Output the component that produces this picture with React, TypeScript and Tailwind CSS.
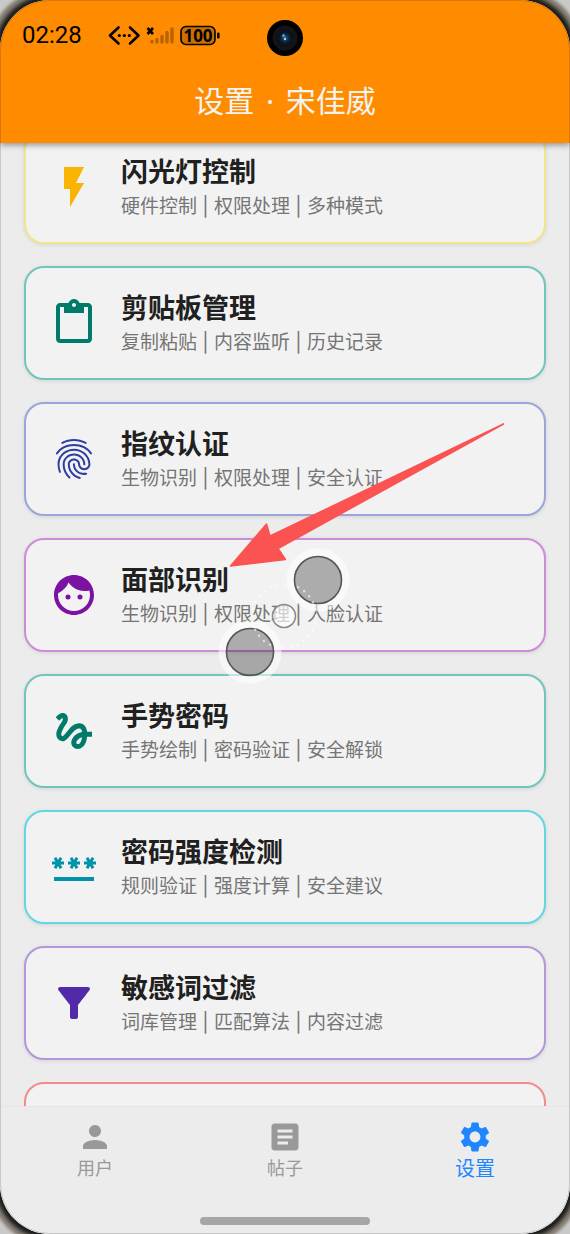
import type { ReactNode } from "react";
import type { IconType } from "react-icons";
import {
   MdArticle,
   MdContentPaste,
   MdFace,
   MdFilterAlt,
   MdFingerprint,
   MdFlashOn,
   MdGesture,
   MdPassword,
   MdPerson,
   MdSettings,
} from "react-icons/md";

type Feature = {
   title: string;
   tags: string;
   icon: IconType;
   border: string;
   color: string;
};

const features: Feature[] = [
   { title: "闪光灯控制", tags: "硬件控制 | 权限处理 | 多种模式", icon: MdFlashOn, border: "border-[#f3e58a]", color: "text-[#fab300]" },
   { title: "剪贴板管理", tags: "复制粘贴 | 内容监听 | 历史记录", icon: MdContentPaste, border: "border-[#72c5bc]", color: "text-[#007a6a]" },
   { title: "指纹认证", tags: "生物识别 | 权限处理 | 安全认证", icon: MdFingerprint, border: "border-[#9aa5d9]", color: "text-[#2c3e9f]" },
   { title: "面部识别", tags: "生物识别 | 权限处理 | 人脸认证", icon: MdFace, border: "border-[#cd8cd8]", color: "text-[#7c12a2]" },
   { title: "手势密码", tags: "手势绘制 | 密码验证 | 安全解锁", icon: MdGesture, border: "border-[#72c5bc]", color: "text-[#007a6a]" },
   { title: "密码强度检测", tags: "规则验证 | 强度计算 | 安全建议", icon: MdPassword, border: "border-[#62d7e2]", color: "text-[#0092a8]" },
   { title: "敏感词过滤", tags: "词库管理 | 匹配算法 | 内容过滤", icon: MdFilterAlt, border: "border-[#b198da]", color: "text-[#5229a8]" },
];

const tabs = [
   { label: "用户", icon: MdPerson, active: false },
   { label: "帖子", icon: MdArticle, active: false },
   { label: "设置", icon: MdSettings, active: true },
];

function StatusBar() {
   return (
      <div className="flex h-[70px] items-center px-[22px] text-black">
         <span className="font-[Roboto] text-[24px] leading-8">02:28</span>
         <svg className="ml-[25px] h-8 w-[116px]" viewBox="0 0 116 32" fill="none" aria-hidden="true">
            <g stroke="#000" strokeWidth="2.6" strokeLinecap="round" strokeLinejoin="round">
               <path d="M11.500 8.500 3 16.500l8.500 8M23 8.500l8.500 8-8.500 8" />
               <path d="m40.500 9 5.500 6m0-6-5.500 6" strokeLinecap="butt" />
            </g>
            <g fill="#000">
               <circle cx="12.300" cy="16.500" r="1.600" />
               <circle cx="17.300" cy="16.500" r="1.600" />
               <circle cx="22.300" cy="16.500" r="1.600" />
            </g>
            <g stroke="#b86300" strokeWidth="3.400" strokeLinecap="round">
               <path d="M45 22.500v.5M50 20.500v2.500M55 17.500v5.500M60 13.500v9.500M65 10v13" />
            </g>
            <rect x="74" y="7.500" width="34" height="18" rx="5" fill="#cc6f00" stroke="#000" strokeWidth="1.600" />
            <rect x="110" y="13.500" width="2.600" height="6" rx="1.300" fill="#000" />
            <text x="91" y="22.500" textAnchor="middle" fill="#000" fontSize="17" fontWeight="700" fontFamily="Noto Sans">
               100
            </text>
         </svg>
      </div>
   );
}

function Camera() {
   return (
      <svg className="absolute top-5 left-1/2 size-9 -translate-x-1/2" viewBox="0 0 36 36" aria-hidden="true">
         <defs>
            <radialGradient id="lens">
               <stop offset="0" stopColor="#2f6d9e" />
               <stop offset=".35" stopColor="#142c47" />
               <stop offset=".7" stopColor="#0a131c" />
               <stop offset="1" stopColor="#0f1114" />
            </radialGradient>
         </defs>
         <circle cx="18" cy="18" r="18" fill="#000" />
         <circle cx="18" cy="18" r="12.500" fill="#121417" />
         <circle cx="18" cy="18" r="9" fill="url(#lens)" />
         <circle cx="16.500" cy="15.500" r="1.500" fill="#4d9ad6" />
         <circle cx="18" cy="19" r="1.200" fill="#9bd0ff" />
      </svg>
   );
}

function FeatureCard({ feature }: { feature: Feature }) {
   const Icon = feature.icon;
   return (
      <button
         className={`flex h-[114px] w-full shrink-0 items-center gap-[23px] rounded-[20px] border-2 bg-[#f2f2f2] px-6 text-left shadow-[0_1px_4px_rgba(0,0,0,0.1)] ${feature.border}`}
      >
         <Icon className={`size-12 shrink-0 ${feature.color}`} />
         <span className="flex flex-col pt-1">
            <span className="text-[27px] leading-9 font-bold text-[#202020]">{feature.title}</span>
            <span className="text-[19px] leading-8 text-[#757575]">{feature.tags}</span>
         </span>
      </button>
   );
}

function Pointer() {
   return (
      <svg className="pointer-events-none absolute top-[420px] left-[210px] z-10 h-[270px] w-[300px]" viewBox="210 420 300 270" aria-hidden="true">
         {[
            [318, 580],
            [250, 652],
         ].map(([cx, cy]) => (
            <g key={cx}>
               <circle cx={cx} cy={cy} r="28" fill="none" stroke="#fff" strokeOpacity=".55" strokeWidth="7" />
               <circle cx={cx} cy={cy} r="23.500" fill="#000" fillOpacity=".29" stroke="#555" strokeWidth="1.600" />
            </g>
         ))}
         <circle
            cx="284"
            cy="616"
            r="32"
            fill="none"
            stroke="#fff"
            strokeOpacity=".6"
            strokeWidth="2.600"
            strokeLinecap="round"
            strokeDasharray="0 7.180"
         />
         <circle cx="284" cy="616" r="11.500" fill="#fff" fillOpacity=".65" stroke="#8c8c8c" strokeWidth="1.600" />
         <path
            d="M503.500 424 270 536l-3.500-12L230.500 566l55-6.500-7.500-11z"
            fill="#fb5252"
            stroke="#fb5252"
            strokeWidth="1.500"
            strokeLinejoin="round"
         />
      </svg>
   );
}

function Screen({ children }: { children: ReactNode }) {
   return (
      <div className="h-dvh overflow-hidden bg-[#c9c9c9]">
         <div className="relative flex h-full flex-col overflow-hidden rounded-[50px] bg-[#ececec] font-[Inter,'Noto_Sans_CJK_SC',sans-serif] shadow-[0_0_4px_5px_#1a1a1a,0_0_3px_11px_#8c8478]">
            {children}
            <div className="pointer-events-none absolute inset-0 z-20 rounded-[50px] border border-black/15" />
         </div>
      </div>
   );
}

export default function App() {
   return (
      <Screen>
         <header className="relative z-10 h-[143px] shrink-0 bg-[#ff8c00] shadow-[0_2px_6px_rgba(0,0,0,0.4)]">
            <StatusBar />
            <Camera />
            <h1 className="text-center text-[30px] leading-[62px] text-[#f3f3f3]">
               设置<span className="mx-[3px]"> · </span>宋佳威
            </h1>
         </header>
         <main className="min-h-0 flex-1 overflow-hidden px-6">
            <div className="-mt-[13px] flex flex-col gap-[22px]">
               {features.map((feature) => (
                  <FeatureCard key={feature.title} feature={feature} />
               ))}
               <div className="h-[114px] shrink-0 rounded-[20px] border-2 border-[#f48a8d] bg-[#f2f2f2]" />
            </div>
         </main>
         <nav className="relative z-10 shrink-0 border-t border-[#e6e6e6] bg-[#ececec]">
            <div className="grid h-[106px] grid-cols-3">
               {tabs.map(({ label, icon: Icon, active }) => (
                  <button
                     key={label}
                     className={`flex flex-col items-center pt-3 ${active ? "text-[20px] text-[#1f86ff]" : "text-[18px] text-[#999]"}`}
                  >
                     <Icon className="size-9" />
                     <span className="leading-7">{label}</span>
                  </button>
               ))}
            </div>
            <div className="mx-auto mt-1 mb-[9px] h-2 w-[170px] rounded-full bg-[#a6a6a6]" />
         </nav>
         <Pointer />
      </Screen>
   );
}
